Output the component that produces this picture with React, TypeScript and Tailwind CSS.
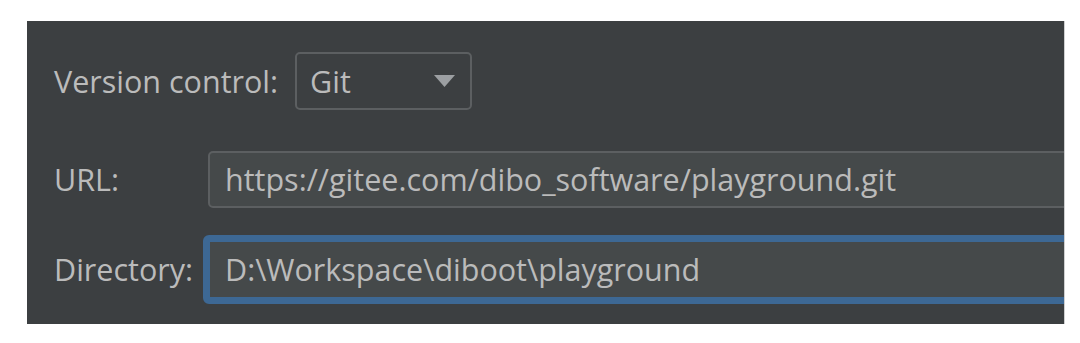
const font = { fontFamily: '"Open Sans", "Noto Sans", Arial, sans-serif' };

function Dropdown({ value }: { value: string }) {
  return (
    <div className="flex h-[58px] w-[177px] items-center justify-between rounded-[5px] border-2 border-[#5c5f61] pl-[13px] pr-[15px]">
      <span className="text-[#bbbbbb]">{value}</span>
      <svg width="21" height="12" viewBox="0 0 21 12" aria-hidden="true">
        <polygon points="0,0 21,0 10.5,12" fill="#9c9fa2" />
      </svg>
    </div>
  );
}

export default function App() {
  return (
    <div className="min-h-[343px] bg-white pt-[21px] pl-[27px] pr-[15px]" style={font}>
      <div className="overflow-hidden border-r border-[#cfd0d1] bg-[#3c3f41] pt-[31px] pb-[20px] pl-[27px] text-[30.5px] leading-none text-[#bbbbbb]">
        {/* Version control row */}
        <div className="flex items-center gap-[17px]">
          <span className="whitespace-nowrap">Version control:</span>
          <Dropdown value="Git" />
        </div>

        {/* URL + Directory */}
        <div className="mt-[41px] grid grid-cols-[154px_1fr] items-center gap-y-[27px]">
          <span>URL:</span>
          <div className="-mr-[20px] flex h-[57px] items-center rounded-[5px] border-2 border-[#5c5f61] bg-[#45494a] pl-[15px]">
            <span className="whitespace-nowrap">https://gitee.com/dibo_software/playground.git</span>
          </div>

          <span>Directory:</span>
          <div className="-ml-[5px] -mr-[20px] flex h-[69px] items-center rounded-[6px] border-[7px] border-[#3d6894] bg-[#45494a] pl-[15px]">
            <span className="whitespace-nowrap">D:\Workspace\diboot\playground</span>
          </div>
        </div>
      </div>
    </div>
  );
}
